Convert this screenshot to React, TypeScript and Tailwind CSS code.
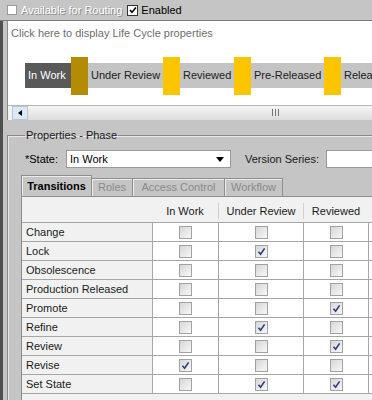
import React from 'react';

const rows: { name: string; checks: boolean[] }[] = [
  { name: 'Change', checks: [false, false, false] },
  { name: 'Lock', checks: [false, true, false] },
  { name: 'Obsolescence', checks: [false, false, false] },
  { name: 'Production Released', checks: [false, false, false] },
  { name: 'Promote', checks: [false, false, true] },
  { name: 'Refine', checks: [false, true, false] },
  { name: 'Review', checks: [false, false, true] },
  { name: 'Revise', checks: [true, false, false] },
  { name: 'Set State', checks: [false, true, true] },
];

function Box({ on }: { on?: boolean }) {
  return (
    <span className="inline-flex h-[13px] w-[13px] items-center justify-center border border-[#a2a2a2] bg-linear-to-br from-[#d6d6d6] to-[#f8f8f8]">
      {on && (
        <svg viewBox="0 0 9 9" className="h-[9px] w-[9px]">
          <path d="M1.5 4.8 L3.6 7.2 L7.6 1.4" fill="none" stroke="#2b3d7c" strokeWidth="1.6" />
        </svg>
      )}
    </span>
  );
}

function Phase({ label, w, dark }: { label: string; w: string; dark?: boolean }) {
  return (
    <div
      className={`flex h-[25px] shrink-0 items-center pl-[3px] text-[11px] whitespace-nowrap ${w} ${
        dark ? 'bg-[#595959] text-white' : 'bg-[#c4c4c4] text-[#202020]'
      }`}
    >
      {label}
    </div>
  );
}

function Gate({ dark }: { dark?: boolean }) {
  return <div className={`h-[41px] w-[17px] shrink-0 ${dark ? 'bg-[#b48c04]' : 'bg-[#fdc500]'}`} />;
}

export default function App() {
  return (
    <div className="flex h-[400px] w-[372px] flex-col overflow-hidden bg-[#c5c5c5] font-['Liberation_Sans',Arial,sans-serif] text-[11px] text-black">
      {/* top bar */}
      <div className="flex h-[21px] shrink-0 items-center gap-[4px] border-b border-[#7c7c7c] pl-[7px]">
        <span className="h-[10px] w-[10px] border border-[#9a9a9a] bg-white" />
        <span className="text-white [text-shadow:1px_1px_0_#8c8c8c]">Available for Routing</span>
        <span className="ml-[1px] inline-flex h-[11px] w-[11px] items-center justify-center border border-[#333] bg-white">
          <svg viewBox="0 0 9 9" className="h-[8px] w-[8px]">
            <path d="M1.2 4.6 L3.4 7 L7.8 1.6" fill="none" stroke="#000" strokeWidth="1.8" />
          </svg>
        </span>
        <span className="-ml-[1px]">Enabled</span>
      </div>

      <div className="flex min-h-0 flex-1">
        <div className="w-[3px] shrink-0 bg-[#4f4f4f]" />
        <div className="flex min-w-0 flex-1 flex-col pl-[4px]">
          {/* lifecycle diagram */}
          <div className="flex h-[99px] shrink-0 flex-col border-l border-[#8a8a8a] bg-white">
            <div className="pl-[3px] pt-[4px] text-[#6e6e6e]">Click here to display Life Cycle properties</div>
            <div className="mt-[15px] flex items-center overflow-hidden pl-[17px]">
              <Phase label="In Work" w="w-[46px]" dark />
              <Gate dark />
              <Phase label="Under Review" w="w-[75px]" />
              <Gate />
              <Phase label="Reviewed" w="w-[54px]" />
              <Gate />
              <Phase label="Pre-Released" w="w-[73px]" />
              <Gate />
              <Phase label="Released" w="w-[60px]" />
            </div>
            <div className="mt-[10px] flex h-[16px] items-stretch border-t border-[#b8b8b8] bg-[#f2f2f2] pl-[4px]">
              <div className="flex w-[16px] items-center justify-center border border-[#b4c8dc] bg-[#dbe8f5]">
                <span className="h-0 w-0 border-y-[3.5px] border-r-[4px] border-y-transparent border-r-black" />
              </div>
              <div className="flex flex-1 items-center justify-center bg-linear-to-b from-[#f6f6f6] to-[#dcdcdc] pl-[150px]">
                <span className="flex gap-[2px]">
                  <span className="h-[7px] w-px bg-[#777]" />
                  <span className="h-[7px] w-px bg-[#777]" />
                  <span className="h-[7px] w-px bg-[#777]" />
                </span>
              </div>
            </div>
          </div>

          {/* properties group */}
          <fieldset className="mt-[8px] flex min-h-0 flex-1 flex-col border-l border-t border-[#8a8a8a] shadow-[inset_1px_1px_0_#e8e8e8]">
            <legend className="ml-[17px] px-[1px] leading-[14px] text-[#1a1a1a]">Properties - Phase</legend>
            <div className="mt-[8px] flex h-[18px] items-center pl-[17px]">
              <span className="w-[41px]">*State:</span>
              <div className="flex h-[18px] w-[165px] items-center justify-between border border-[#9a9a9a] bg-white pl-[3px] pr-[6px]">
                <span>In Work</span>
                <span className="h-0 w-0 border-x-[4px] border-t-[5px] border-x-transparent border-t-black" />
              </div>
              <span className="ml-[14px] text-[#1a1a1a]">Version Series:</span>
              <div className="ml-[7px] h-[18px] flex-1 border border-[#9a9a9a] bg-white" />
            </div>

            {/* tabs */}
            <div className="mt-[7px] flex items-end pl-[13px]">
              <div className="flex h-[21px] w-[71px] items-center justify-center border border-b-0 border-[#8e8e8e] bg-[#c5c5c5] font-bold shadow-[inset_1px_1px_0_#ececec]">
                Transitions
              </div>
              <div className="flex h-[18px] w-[41px] items-center justify-center border border-b-0 border-l-0 border-[#8e8e8e] text-[#8a8a8a] shadow-[inset_1px_1px_0_#ececec]">
                Roles
              </div>
              <div className="flex h-[18px] w-[92px] items-center justify-center border border-b-0 border-l-0 border-[#8e8e8e] text-[#8a8a8a] shadow-[inset_1px_1px_0_#ececec]">
                Access Control
              </div>
              <div className="flex h-[18px] w-[58px] items-center justify-center border border-b-0 border-l-0 border-[#8e8e8e] text-[#8a8a8a] shadow-[inset_1px_1px_0_#ececec]">
                Workflow
              </div>
            </div>

            {/* transitions table */}
            <div className="ml-[13px] flex-1 border-l border-t border-[#8e8e8e] bg-[#f1f1f1]">
              <div className="grid h-[26px] grid-cols-[130px_66px_85px_65px_60px] items-center border-b border-[#a6a6a6] pt-[3px] text-[#1a1a1a]">
                <span />
                <span className="text-center">In Work</span>
                <span className="border-l border-[#d0d0d0] text-center">Under Review</span>
                <span className="border-l border-[#d0d0d0] text-center">Reviewed</span>
                <span className="border-l border-[#d0d0d0]" />
              </div>
              {rows.map((r) => (
                <div
                  key={r.name}
                  className="grid h-[19px] grid-cols-[130px_66px_85px_65px_60px] border-b border-[#a6a6a6]"
                >
                  <span className="flex items-center pl-[4px] text-[#1a1a1a]">{r.name}</span>
                  {r.checks.map((c, i) => (
                    <span key={i} className="flex items-center justify-center border-l border-[#a6a6a6] bg-white">
                      <Box on={c} />
                    </span>
                  ))}
                  <span className="border-l border-[#a6a6a6] bg-white" />
                </div>
              ))}
            </div>
          </fieldset>
        </div>
      </div>
    </div>
  );
}
